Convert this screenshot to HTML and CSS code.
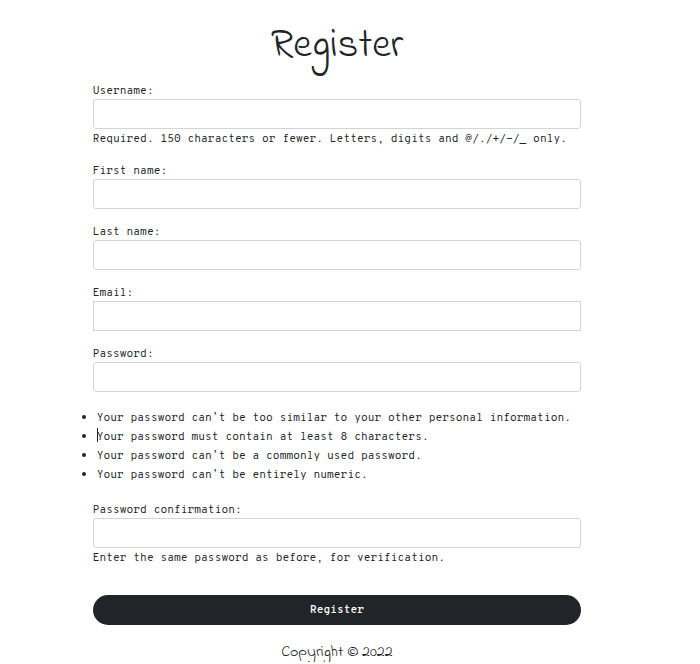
FILE: index.html
```html
<!DOCTYPE html>
<html lang="en">
<head>
<meta charset="utf-8">
<meta name="viewport" content="width=device-width, initial-scale=1">
<title>Register</title>
<link rel="stylesheet" href="styles.css">
</head>
<body>
<main class="page">
  <h1 class="title">Register</h1>
  <form class="form">
    <div class="field">
      <label for="username">Username:</label>
      <input id="username" type="text">
      <p class="help">Required. 150 characters or fewer. Letters, digits and @/./+/-/_ only.</p>
    </div>
    <div class="field">
      <label for="first">First name:</label>
      <input id="first" type="text">
    </div>
    <div class="field">
      <label for="last">Last name:</label>
      <input id="last" type="text">
    </div>
    <div class="field">
      <label for="email">Email:</label>
      <input id="email" class="square" type="email">
    </div>
    <div class="field">
      <label for="password">Password:</label>
      <input id="password" type="password">
    </div>
    <ul class="rules">
      <li>Your password can’t be too similar to your other personal information.</li>
      <li><span class="caret"></span>Your password must contain at least 8 characters.</li>
      <li>Your password can’t be a commonly used password.</li>
      <li>Your password can’t be entirely numeric.</li>
    </ul>
    <div class="field">
      <label for="confirm">Password confirmation:</label>
      <input id="confirm" type="password">
      <p class="help">Enter the same password as before, for verification.</p>
    </div>
    <button class="submit" type="submit">Register</button>
  </form>
  <footer class="footer">Copyright © 2022</footer>
</main>
</body>
</html>
```
FILE: styles.css
```css
* { box-sizing: border-box; }

body {
  margin: 0;
  padding: 0 26px 0 0;
  background: #fff;
  color: #212529;
  font: 11px/19px "Overpass Mono", Consolas, "Liberation Mono", monospace;
  font-variant-ligatures: none;
}

.page {
  width: 72.5%;
  margin: 0 auto;
  padding-top: 16px;
}

.title {
  margin: 0 0 4px;
  font: 400 41px/60px "Indie Flower", cursive;
  text-align: center;
}

.field { margin-bottom: 12px; }

.field label {
  display: block;
  padding-top: 4px;
  line-height: 15px;
}

.field input {
  display: block;
  width: 100%;
  height: 30px;
  padding: 4px 8px;
  border: 1px solid #d2d5d7;
  border-radius: 3px;
  font: inherit;
}

.field .square { border-radius: 0; }

.help {
  margin: 0;
  padding-top: 2px;
  line-height: 17px;
}

.rules {
  margin: 17px 0 14px;
  padding-left: 4px;
  line-height: 18px;
}

.rules li { min-height: 19px; }

.rules li::marker { font-size: 14px; }

.caret {
  position: absolute;
  width: 1px;
  height: 14px;
  background: #212529;
}

.submit {
  display: block;
  width: 100%;
  height: 30px;
  margin-top: 28px;
  border: 0;
  border-radius: 15px;
  background: #212529;
  color: #fff;
  font: inherit;
  font-weight: 600;
}

.footer {
  margin-top: 17px;
  font: 400 16px/20px "Indie Flower", cursive;
  text-align: center;
}
```
